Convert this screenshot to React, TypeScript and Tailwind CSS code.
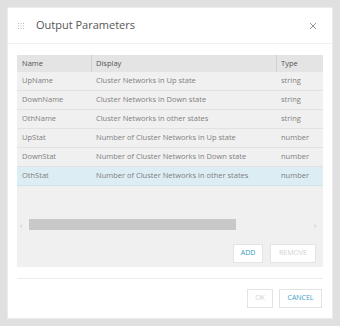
const rows = [
  { name: "UpName", display: "Cluster Networks in Up state", type: "string" },
  { name: "DownName", display: "Cluster Networks in Down state", type: "string" },
  { name: "OthName", display: "Cluster Networks in other states", type: "string" },
  { name: "UpStat", display: "Number of Cluster Networks in Up state", type: "number" },
  { name: "DownStat", display: "Number of Cluster Networks in Down state", type: "number" },
  { name: "OthStat", display: "Number of Cluster Networks in other states", type: "number", selected: true },
];

export default function App() {
  return (
    <div
      className="w-[340px] h-[326px] bg-[#e0e0e0] p-[7px]"
      style={{ fontFamily: '"Open Sans", sans-serif' }}
    >
      <div className="h-[312px] bg-white border border-[#ececec] flex flex-col">
        {/* En-tête */}
        <div className="h-[36px] flex items-center px-[10px] border-b border-[#f0f0f0]">
          <svg width="6" height="6" viewBox="0 0 6 6" className="mr-[12px] text-[#bbb]" fill="currentColor">
            <rect x="0" y="0" width="1" height="1" />
            <rect x="2.5" y="0" width="1" height="1" />
            <rect x="5" y="0" width="1" height="1" />
            <rect x="0" y="2.5" width="1" height="1" />
            <rect x="2.5" y="2.5" width="1" height="1" />
            <rect x="5" y="2.5" width="1" height="1" />
            <rect x="0" y="5" width="1" height="1" />
            <rect x="2.5" y="5" width="1" height="1" />
            <rect x="5" y="5" width="1" height="1" />
          </svg>
          <h1 className="text-[11px] text-[#555] flex-1">Output Parameters</h1>
          <svg width="8" height="8" viewBox="0 0 8 8" className="mr-[5px] text-[#888]" stroke="currentColor" strokeWidth="0.9">
            <line x1="1" y1="1" x2="7" y2="7" />
            <line x1="7" y1="1" x2="1" y2="7" />
          </svg>
        </div>

        {/* Tableau */}
        <div className="mx-[9px] mt-[11px] h-[212px] bg-[#f0f0f0] flex flex-col">
          <div className="grid grid-cols-[75px_185px_1fr] h-[17px] bg-[#e4e4e4] text-[7.5px] text-[#555] items-center">
            <span className="pl-[5px] border-r border-[#d0d0d0] h-full flex items-center">Name</span>
            <span className="pl-[4px] border-r border-[#d0d0d0] h-full flex items-center">Display</span>
            <span className="pl-[4px]">Type</span>
          </div>
          {rows.map((r) => (
            <div
              key={r.name}
              className={`grid grid-cols-[75px_185px_1fr] h-[19px] items-center text-[7.5px] text-[#808080] border-b ${
                r.selected ? "bg-[#dcedf3] border-[#cfe3ea]" : "border-[#e2e2e2]"
              }`}
            >
              <span className="pl-[5px]">{r.name}</span>
              <span className="pl-[4px] whitespace-nowrap">{r.display}</span>
              <span className="pl-[4px]">{r.type}</span>
            </div>
          ))}

          {/* Barre de défilement */}
          <div className="mt-[33px] flex items-center h-[11px] px-[3px] text-[#bbb] text-[8px]">
            <span className="w-[9px]">‹</span>
            <div className="w-[207px] h-[11px] bg-[#c8c8c8]" />
            <div className="flex-1" />
            <span className="w-[6px]">›</span>
          </div>

          <div className="mt-[14px] flex justify-end gap-[7px] pr-[7px]">
            <button className="h-[19px] w-[30px] bg-white border border-[#e3e3e3] text-[7px] text-[#3d9cc6]">ADD</button>
            <button className="h-[19px] w-[46px] bg-white border border-[#e3e3e3] text-[7px] text-[#d2d2d2]">REMOVE</button>
          </div>
        </div>

        {/* Pied */}
        <div className="mx-[9px] mt-[11px] border-t border-[#ececec]" />
        <div className="mt-[10px] flex justify-end gap-[6px] pr-[10px]">
          <button className="h-[19px] w-[26px] bg-white border border-[#e3e3e3] text-[7px] text-[#d2d2d2]">OK</button>
          <button className="h-[19px] w-[43px] bg-white border border-[#e3e3e3] text-[7px] text-[#3d9cc6]">CANCEL</button>
        </div>
      </div>
    </div>
  );
}
